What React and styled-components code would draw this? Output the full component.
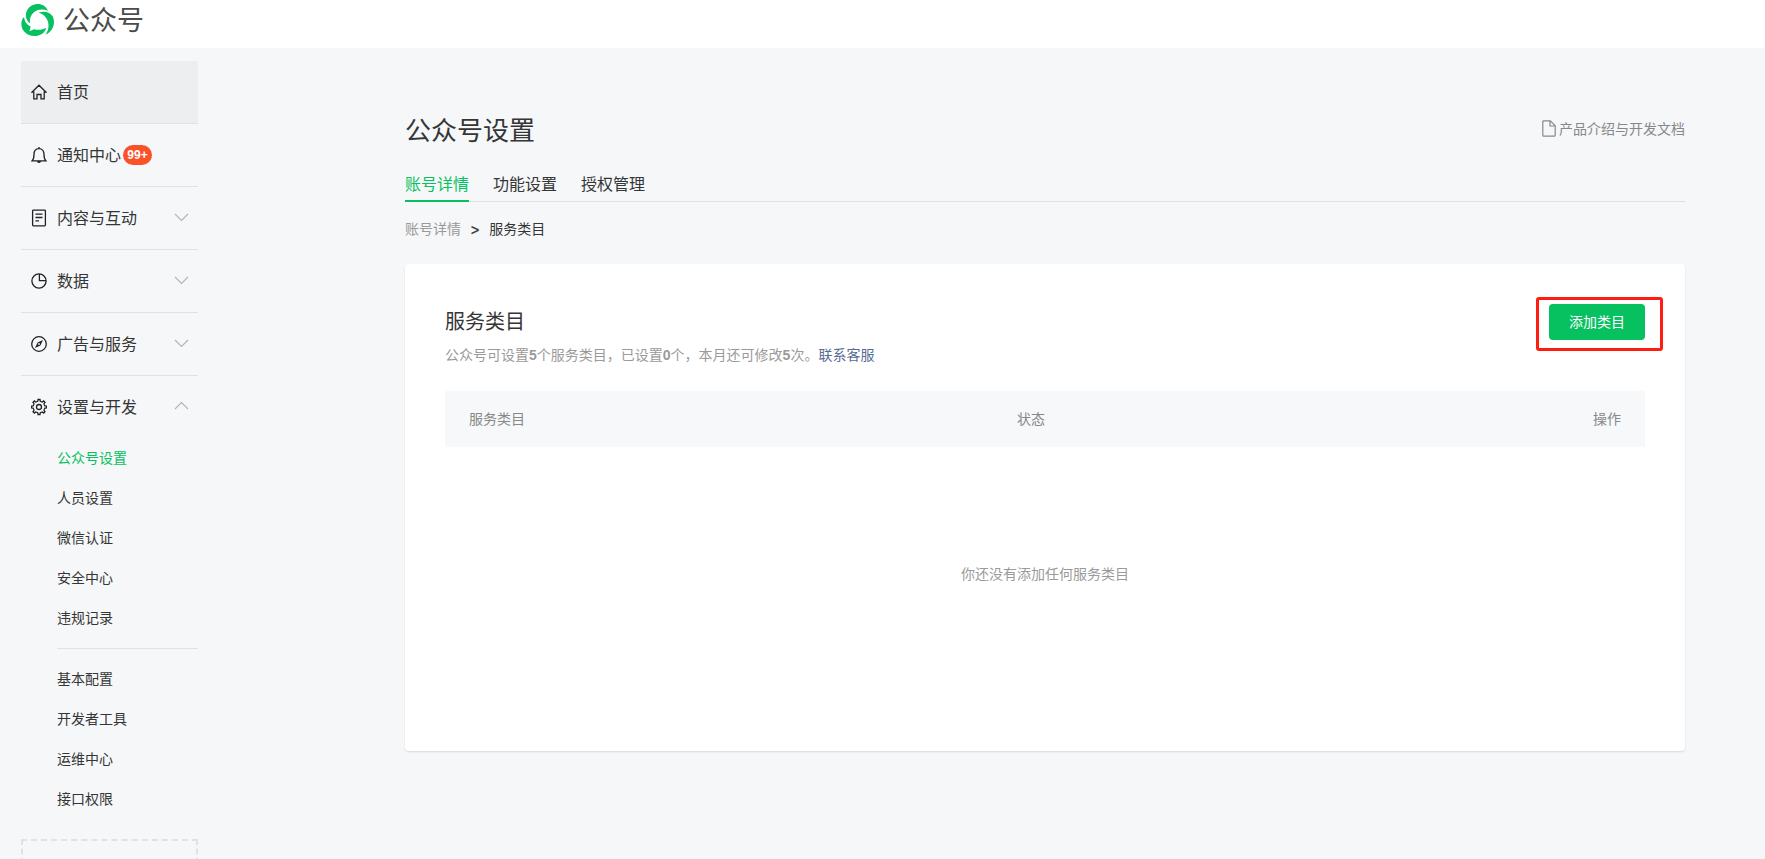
import React from 'react'
import styled, { createGlobalStyle, css } from 'styled-components'

const GlobalStyle = createGlobalStyle`
  * {
    box-sizing: border-box;
  }

  body {
    margin: 0;
    background: #f6f7f9;
    color: #353535;
    font-family: 'Liberation Sans', 'Noto Sans CJK SC', sans-serif;
    font-size: 14px;
    line-height: 1.6;
  }
`

const Page = styled.div`
  height: 859px;
  overflow: hidden;
`

const TopBar = styled.header`
  display: flex;
  align-items: flex-start;
  height: 48px;
  padding: 3px 21px 0;
  background: #fff;
`

const Brand = styled.span`
  margin-left: 8px;
  color: #4c4c4c;
  font-size: 27px;
  line-height: 36px;
`

const Body = styled.div`
  display: flex;
  padding-left: 21px;
`

const Sidebar = styled.nav`
  flex: none;
  width: 177px;
  padding-top: 13px;
`

const MenuItem = styled.div`
  display: flex;
  align-items: center;
  height: 63px;
  padding: 0 9px 0 10px;
  border-bottom: 1px solid ${({ $open }) => ($open ? 'transparent' : '#dfe1e3')};
  background: ${({ $active }) => ($active ? '#edeef0' : 'transparent')};
  font-size: 16px;

  svg {
    flex: none;
  }
`

const MenuLabel = styled.span`
  margin-left: 10px;
  padding-top: 2px;
`

const Badge = styled.span`
  margin-left: 2px;
  width: 29px;
  height: 20px;
  border-radius: 10px;
  background: #fa5128;
  color: #fff;
  font-size: 12px;
  font-weight: bold;
  line-height: 20px;
  text-align: center;
`

const Arrow = styled.svg`
  margin-left: auto;
  margin-bottom: ${({ $up }) => ($up ? '3px' : '2px')};
  transform: ${({ $up }) => ($up ? 'rotate(180deg)' : 'none')};
`

const SubMenu = styled.div`
  display: flex;
  flex-direction: column;
  margin: -1px 0 0 36px;
  padding-bottom: 10px;

  & + & {
    margin-top: 0;
    padding: 10px 0 0;
    border-top: 1px solid #dfe1e3;
  }
`

const SubItem = styled.a`
  height: 40px;
  line-height: 40px;
  color: ${({ $active }) => ($active ? '#07c160' : '#353535')};
`

const NewFeature = styled.div`
  height: 63px;
  margin-top: 20px;
  padding: 16px 10px;
  border: 2px dashed #e1e2e4;
`

const Main = styled.main`
  width: 1280px;
  margin-left: 207px;
  padding-top: 60px;
`

const TitleRow = styled.div`
  display: flex;
  justify-content: space-between;
  align-items: center;
  height: 44px;
`

const Title = styled.h2`
  margin: 0;
  padding-top: 3px;
  font-size: 26px;
  font-weight: 400;
`

const DocLink = styled.a`
  display: flex;
  align-items: center;
  gap: 3px;
  padding-bottom: 2px;
  color: #888;
`

const Tabs = styled.div`
  display: flex;
  gap: 24px;
  height: 50px;
  border-bottom: 1px solid #dfe1e3;
  font-size: 16px;
`

const Tab = styled.a`
  height: 50px;
  padding-top: 20px;
  line-height: 26px;

  ${({ $active }) =>
    $active &&
    css`
      color: #07c160;
      border-bottom: 2px solid #07c160;
    `}
`

const Breadcrumb = styled.div`
  display: flex;
  gap: 10px;
  height: 22px;
  margin-top: 16px;
  line-height: 22px;

  a {
    color: #9a9a9a;
  }
`

const Separator = styled.span`
  padding-top: 1px;
  -webkit-text-stroke: 0.4px #353535;
`

const Card = styled.section`
  height: 487px;
  margin-top: 24px;
  padding: 40px;
  border-radius: 4px;
  background: #fff;
  box-shadow: 0 1px 2px rgba(0, 0, 0, 0.12);
`

const CardHead = styled.div`
  display: flex;
  justify-content: space-between;
  height: 87px;
`

const CardTitle = styled.h3`
  margin: 0;
  font-size: 20px;
  font-weight: 400;
  line-height: 36px;
`

const Desc = styled.p`
  margin: 4px 0 0;
  color: #9a9a9a;
  line-height: 22px;

  a {
    color: #576b95;
  }
`

const AddWrap = styled.div`
  position: relative;
`

const AddButton = styled.button`
  width: 96px;
  height: 36px;
  padding: 0;
  border: 0;
  border-radius: 4px;
  background: #07c160;
  color: #fff;
  font: inherit;
`

const Highlight = styled.span`
  position: absolute;
  top: -7px;
  left: -13px;
  width: 127px;
  height: 54px;
  border: 3px solid #ff1c10;
  border-radius: 3px;
`

const TableHead = styled.div`
  display: grid;
  grid-template-columns: 548px 1fr auto;
  align-items: center;
  height: 56px;
  padding: 0 24px;
  background: #f6f8f9;
  color: #888;
`

const Empty = styled.p`
  margin: 116px 0 0;
  color: #9a9a9a;
  line-height: 22px;
  text-align: center;
`

const iconProps = {
  width: 16,
  height: 18,
  viewBox: '0 0 16 18',
  fill: 'none',
  stroke: '#222',
  strokeWidth: 1.3,
}

function Logo() {
  return (
    <svg width="34" height="34" viewBox="0 0 34 34" fill="#07c160">
      <path d="M5 10.500C6.500 4.500 11 1 16.500 1C21.500 1 25.200 3.500 27 7.800C22 5.800 17 6 13.200 9C9.800 11.800 8.300 15.500 9 20.500C5.800 18 4.200 14.500 5 10.500Z" />
      <path d="M17.500 9.400C23.500 7.800 29 8.500 31.800 13.500C34.800 20 32 28.500 24.600 31.600C27.400 27.500 28.200 23 26.900 18.500C25.700 14.300 22.500 11 17.500 9.400Z" />
      <path d="M3 14C3.600 18.500 5.500 21.500 9.600 23.600L8.600 28.300L13 26.200C17 27.200 21 26.900 25.300 24.700C24 30.300 18.500 33.200 13 33C6 32.600 .8 28 .4 22C.2 18.500 1 16 3 14Z" />
    </svg>
  )
}

function HomeIcon() {
  return (
    <svg {...iconProps}>
      <path d="M2.800 9.200H.9L8 2.200L15.100 9.200H13.200V15.800H10V11.500H6V15.800H2.800Z" />
    </svg>
  )
}

function BellIcon() {
  return (
    <svg {...iconProps}>
      <path d="M1.200 14.800H14.800C13.300 13.300 13 12 13 8.500C13 5 11 2.600 8 2.600S3 5 3 8.500C3 12 2.700 13.300 1.200 14.800ZM8 1V2.600M6.500 15.300Q8 17.500 9.500 15.300" />
    </svg>
  )
}

function ContentIcon() {
  return (
    <svg {...iconProps}>
      <rect x="1.600" y="1.100" width="12.800" height="15.800" rx=".8" />
      <path d="M4.500 5.200H11.500M4.500 8.500H11.500M4.500 11.800H8" />
    </svg>
  )
}

function DataIcon() {
  return (
    <svg {...iconProps}>
      <circle cx="8" cy="9" r="7.100" />
      <path d="M8.400 2V8.600H15" />
    </svg>
  )
}

function CompassIcon() {
  return (
    <svg {...iconProps}>
      <circle cx="8" cy="9" r="7.300" />
      <path d="M12 5L9.400 10.400L4 13L6.600 7.600Z" fill="#222" stroke="none" />
      <circle cx="8" cy="9" r=".9" fill="#f6f7f9" stroke="none" />
    </svg>
  )
}

function GearIcon() {
  const teeth = [0, 45, 90, 135, 180, 225, 270, 315]
  return (
    <svg {...iconProps}>
      <circle cx="8" cy="9" r="2.500" />
      {teeth.map((deg) => (
        <path
          key={deg}
          transform={`rotate(${deg} 8 9)`}
          d="M5.800 3.700L6.800 3.100L7 1.500H9L9.200 3.100L10.200 3.700"
        />
      ))}
    </svg>
  )
}

function DocIcon() {
  return (
    <svg width="14" height="17" viewBox="0 0 14 17" fill="none" stroke="#888" strokeWidth="1.200">
      <path d="M1.600.8H8.300L13.200 5.700V15.300Q13.200 16.200 12.300 16.200H1.700Q.8 16.200.8 15.300V1.600Q.8.8 1.600.8ZM8 1V6H13" />
    </svg>
  )
}

const menu = [
  { label: '首页', icon: HomeIcon, active: true },
  { label: '通知中心', icon: BellIcon, badge: '99+' },
  { label: '内容与互动', icon: ContentIcon, arrow: true },
  { label: '数据', icon: DataIcon, arrow: true },
  { label: '广告与服务', icon: CompassIcon, arrow: true },
  { label: '设置与开发', icon: GearIcon, arrow: true, open: true },
]

const settings = ['公众号设置', '人员设置', '微信认证', '安全中心', '违规记录']
const develop = ['基本配置', '开发者工具', '运维中心', '接口权限']

function SideMenu() {
  return (
    <Sidebar>
      {menu.map(({ label, icon: Icon, active, badge, arrow, open }) => (
        <MenuItem key={label} $active={active} $open={open}>
          <Icon />
          <MenuLabel>{label}</MenuLabel>
          {badge && <Badge>{badge}</Badge>}
          {arrow && (
            <Arrow $up={open} width="15" height="9" viewBox="0 0 15 9" fill="none" stroke="#b2b3b5" strokeWidth="1.100">
              <path d="M1 1L7.500 7.500L14 1" />
            </Arrow>
          )}
        </MenuItem>
      ))}
      <SubMenu>
        {settings.map((label, i) => (
          <SubItem key={label} $active={i === 0}>{label}</SubItem>
        ))}
      </SubMenu>
      <SubMenu>
        {develop.map((label) => (
          <SubItem key={label}>{label}</SubItem>
        ))}
      </SubMenu>
      <NewFeature>
        <svg width="14" height="14" viewBox="0 0 14 14" fill="none" stroke="#aaa">
          <path d="M7 .5L13 4V10.500L7 13.500L1 10.500V4Z" />
        </svg>
      </NewFeature>
    </Sidebar>
  )
}

function App() {
  return (
    <Page>
      <GlobalStyle />
      <TopBar>
        <Logo />
        <Brand>公众号</Brand>
      </TopBar>
      <Body>
        <SideMenu />
        <Main>
          <TitleRow>
            <Title>公众号设置</Title>
            <DocLink>
              <DocIcon />
              产品介绍与开发文档
            </DocLink>
          </TitleRow>
          <Tabs>
            <Tab $active>账号详情</Tab>
            <Tab>功能设置</Tab>
            <Tab>授权管理</Tab>
          </Tabs>
          <Breadcrumb>
            <a>账号详情</a>
            <Separator>&gt;</Separator>
            <span>服务类目</span>
          </Breadcrumb>
          <Card>
            <CardHead>
              <div>
                <CardTitle>服务类目</CardTitle>
                <Desc>
                  公众号可设置<b>5</b>个服务类目，已设置<b>0</b>个，本月还可修改<b>5</b>次。<a>联系客服</a>
                </Desc>
              </div>
              <AddWrap>
                <AddButton>添加类目</AddButton>
                <Highlight />
              </AddWrap>
            </CardHead>
            <TableHead>
              <span>服务类目</span>
              <span>状态</span>
              <span>操作</span>
            </TableHead>
            <Empty>你还没有添加任何服务类目</Empty>
          </Card>
        </Main>
      </Body>
    </Page>
  )
}

export default App
